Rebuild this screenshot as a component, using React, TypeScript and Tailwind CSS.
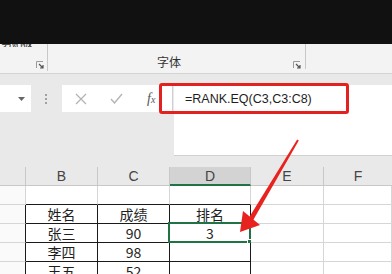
import React from "react";

const LIGHT = "border-[#d6d6d6]";
const BLACK = "border-[#1a1a1a]";

function Launcher() {
  return (
    <svg width="8" height="8" viewBox="0 0 8 8" className="block">
      <path d="M0.5 7 V0.5 H7" fill="none" stroke="#9a9a9a" strokeWidth="1" />
      <path d="M3 3 L7 7 M7 4 V7 H4" fill="none" stroke="#555" strokeWidth="1.2" />
    </svg>
  );
}

type Cell = { t?: string; b?: boolean; sel?: boolean };

const widths = ["w-[26px]", "w-[72px]", "w-[72px]", "w-[81px]", "w-[73px]", "flex-1"];

function Row({ cells, blackLeft, blackBottom }: { cells: Cell[]; blackLeft?: boolean; blackBottom?: boolean }) {
  return (
    <div className="flex h-[19px]">
      <div className={`${widths[0]} h-full shrink-0 border-r border-b ${blackLeft ? BLACK : LIGHT} bg-[#fafafa]`} style={blackLeft ? { borderBottomColor: "#d6d6d6" } : undefined} />
      {cells.map((c, i) => {
        const isTable = i < 3;
        const rightBlack = isTable && blackLeft;
        const bottomBlack = isTable && (blackLeft || blackBottom);
        return (
          <div
            key={i}
            className={`${widths[i + 1]} relative h-full shrink-0 border-r border-b bg-white flex items-center justify-center text-[14px] leading-none text-[#1e1e1e]`}
            style={{
              borderRightColor: rightBlack ? "#1a1a1a" : "#d6d6d6",
              borderBottomColor: bottomBlack ? "#1a1a1a" : "#d6d6d6",
              fontFamily: '"Noto Sans CJK SC", "Noto Sans", sans-serif',
            }}
          >
            <span className="relative top-[0px]">{c.t}</span>
            {c.sel && (
              <>
                <div className="absolute -left-[2px] -top-[2px] -right-[1px] -bottom-[1px] border-2 border-[#217346]" />
                <div className="absolute -right-[3px] -bottom-[3px] w-[6px] h-[6px] bg-[#217346] border border-white" />
              </>
            )}
          </div>
        );
      })}
    </div>
  );
}

export default function App() {
  return (
    <div className="relative w-[392px] h-[274px] overflow-hidden bg-[#e9e9e9]" style={{ fontFamily: '"Noto Sans CJK SC", "Noto Sans", sans-serif' }}>
      {/* top black band */}
      <div className="h-[44px] bg-[#111111]" />

      {/* ribbon group labels */}
      <div className="h-[30px] bg-[#f3f3f3] border-b border-[#d4d4d4] flex overflow-hidden">
        <div className="w-[47px] h-full flex flex-col justify-between pb-[4px]">
          <div className="-mt-[7px] h-[10px] overflow-hidden text-[11px] leading-none text-[#222] pl-[1px] tracking-[-0.5px]">剪贴板</div>
          <div className="flex justify-end pr-[3px]"><Launcher /></div>
        </div>
        <div className="w-px h-[27px] bg-[#c8c8c8]" />
        <div className="w-[257px] h-full flex flex-col justify-end pb-[4px]">
          <div className="flex items-end">
            <div className="pl-[109px] text-[12px] leading-none text-[#333] pb-[1px]">字体</div>
            <div className="flex-1" />
            <div className="pr-[4px]"><Launcher /></div>
          </div>
        </div>
        <div className="w-px h-[28px] bg-[#c8c8c8] -mt-[3px]" />
        <div className="flex-1" />
      </div>

      {/* formula bar area */}
      <div className="h-[93px] flex items-start pt-[11px]">
        <div className="relative w-[31px] h-[27px] bg-white flex items-center justify-end pr-[6px]">
          <svg width="7" height="4" viewBox="0 0 7 4"><path d="M0 0 H7 L3.5 4 Z" fill="#666" /></svg>
        </div>
        <div className="w-[31px] h-[27px] flex flex-col items-center justify-center gap-[2px] pr-[1px]">
          <div className="w-[2px] h-[2px] bg-[#a0a0a0]" />
          <div className="w-[2px] h-[2px] bg-[#a0a0a0]" />
          <div className="w-[2px] h-[2px] bg-[#a0a0a0]" />
        </div>
        <div className="w-[110px] h-[27px] bg-white flex items-center">
          <svg width="12" height="12" viewBox="0 0 12 12" className="ml-[13px]">
            <path d="M1 1 L11 11 M11 1 L1 11" stroke="#b4b4b4" strokeWidth="1.3" fill="none" />
          </svg>
          <svg width="13" height="11" viewBox="0 0 13 11" className="ml-[23px]">
            <path d="M1 6 L4.5 10 L12 1" stroke="#b4b4b4" strokeWidth="1.4" fill="none" />
          </svg>
          <span className="ml-[24px] italic text-[14px] leading-none text-[#555]" style={{ fontFamily: '"Liberation Serif", serif' }}>
            f<span className="text-[10px]">x</span>
          </span>
        </div>
        <div className="w-px h-[27px] bg-[#d0d0d0]" />
        <div className="w-px" />
        <div className="flex-1 h-[71px] bg-white border-b border-[#d0d0d0] pl-[11px]">
          <div className="h-[28px] flex items-center text-[12.5px] leading-none text-[#1e1e1e]" style={{ fontFamily: '"Liberation Sans", Arial, sans-serif' }}>
            =RANK.EQ(C3,C3:C8)
          </div>
        </div>
      </div>

      {/* grid */}
      <div className="flex flex-col">
        {/* column header */}
        <div className="flex h-[19px] text-[14px] leading-none text-[#444]" style={{ fontFamily: '"Liberation Sans", Arial, sans-serif' }}>
          <div className="w-[26px] shrink-0 border-r border-b border-[#c8c8c8]" />
          <div className="w-[72px] shrink-0 border-r border-b border-[#c8c8c8] flex items-center justify-center">B</div>
          <div className="w-[72px] shrink-0 border-r border-b border-[#c8c8c8] flex items-center justify-center">C</div>
          <div className="w-[81px] shrink-0 border-r border-[#c8c8c8] bg-[#d3d3d3] border-b-2 border-b-[#217346] flex items-center justify-center">D</div>
          <div className="w-[73px] shrink-0 border-r border-b border-[#c8c8c8] flex items-center justify-center">E</div>
          <div className="flex-1 border-b border-[#c8c8c8] flex items-center justify-center">F</div>
        </div>
        <Row cells={[{}, {}, {}, {}, {}]} blackBottom />
        <Row cells={[{ t: "姓名" }, { t: "成绩" }, { t: "排名" }, {}, {}]} blackLeft />
        <Row cells={[{ t: "张三" }, { t: "90" }, { t: "3", sel: true }, {}, {}]} blackLeft />
        <Row cells={[{ t: "李四" }, { t: "98" }, {}, {}, {}]} blackLeft />
        <Row cells={[{ t: "王五" }, { t: "52" }, {}, {}, {}]} blackLeft />
      </div>

      {/* red annotation box */}
      <div className="absolute left-[159px] top-[83px] w-[190px] h-[31px] border-[3px] border-[#e3211f] rounded-[3px]" />

      {/* red arrow */}
      <svg className="absolute left-0 top-0" width="392" height="274" viewBox="0 0 392 274">
        <polygon points="297.2,139.5 298.8,140.5 253.1,220.3 248.9,217.7" fill="#e8231f" />
        <polygon points="240,232 243,211 260,225" fill="#e8231f" />
      </svg>
    </div>
  );
}
